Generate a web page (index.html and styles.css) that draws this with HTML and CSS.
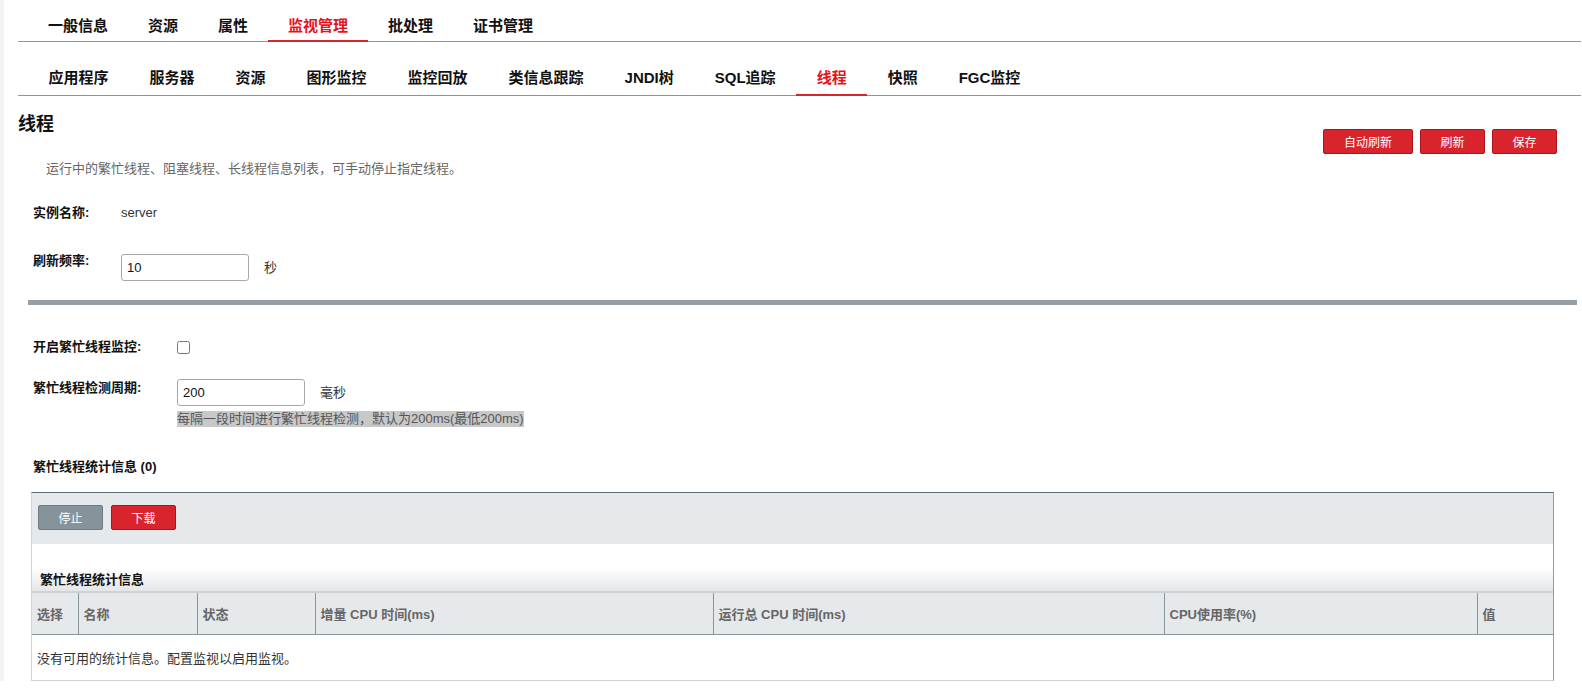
FILE: index.html
```html
<!DOCTYPE html>
<html lang="zh-CN">
<head>
    <meta charset="UTF-8">
    <meta name="viewport" content="width=device-width, initial-scale=1.0">
    <title>线程 - 监视管理</title>
    <link rel="stylesheet" href="styles.css">
</head>
<body>
<div class="page">
    <ul class="tabs main-tabs">
        <li>一般信息</li>
        <li>资源</li>
        <li>属性</li>
        <li class="active">监视管理</li>
        <li>批处理</li>
        <li>证书管理</li>
    </ul>
    <ul class="tabs sub-tabs">
        <li>应用程序</li>
        <li>服务器</li>
        <li>资源</li>
        <li>图形监控</li>
        <li>监控回放</li>
        <li>类信息跟踪</li>
        <li>JNDI树</li>
        <li>SQL追踪</li>
        <li class="active">线程</li>
        <li>快照</li>
        <li>FGC监控</li>
    </ul>

    <div class="header">
        <h1>线程</h1>
        <div class="actions">
            <button class="btn btn-red btn-wide">自动刷新</button>
            <button class="btn btn-red">刷新</button>
            <button class="btn btn-red">保存</button>
        </div>
    </div>
    <p class="desc">运行中的繁忙线程、阻塞线程、长线程信息列表，可手动停止指定线程。</p>

    <div class="form-row first">
        <label class="lbl">实例名称:</label>
        <span class="value">server</span>
    </div>
    <div class="form-row rate">
        <label class="lbl">刷新频率:</label>
        <input type="text" class="txt" value="10">
        <span class="unit">秒</span>
    </div>

    <div class="divider"></div>

    <div class="form-row busy-on">
        <label class="lbl wide">开启繁忙线程监控:</label>
        <input type="checkbox" class="chk">
    </div>
    <div class="form-row busy-period">
        <label class="lbl wide">繁忙线程检测周期:</label>
        <div class="field">
            <div class="field-line">
                <input type="text" class="txt" value="200">
                <span class="unit">毫秒</span>
            </div>
            <span class="hint">每隔一段时间进行繁忙线程检测，默认为200ms(最低200ms)</span>
        </div>
    </div>

    <h2 class="section-title">繁忙线程统计信息 (0)</h2>

    <div class="panel">
        <div class="toolbar">
            <button class="btn btn-gray">停止</button>
            <button class="btn btn-red">下载</button>
        </div>
        <div class="panel-title">繁忙线程统计信息</div>
        <table class="grid">
            <colgroup>
                <col style="width:46px">
                <col style="width:119px">
                <col style="width:118px">
                <col style="width:398px">
                <col style="width:451px">
                <col style="width:313px">
                <col>
            </colgroup>
            <thead>
                <tr>
                    <th>选择</th>
                    <th>名称</th>
                    <th>状态</th>
                    <th>增量 CPU 时间(ms)</th>
                    <th>运行总 CPU 时间(ms)</th>
                    <th>CPU使用率(%)</th>
                    <th>值</th>
                </tr>
            </thead>
            <tbody>
                <tr>
                    <td colspan="7" class="empty">没有可用的统计信息。配置监视以启用监视。</td>
                </tr>
            </tbody>
        </table>
    </div>
</div>
</body>
</html>
```

FILE: styles.css
```css
html, body {
    overflow: hidden;
}
body {
    margin: 0;
    background: white;
    border-left: 4px solid #f3f3f3;
    font-family: "Liberation Sans", "Noto Sans CJK SC", sans-serif;
    color: #222;
    font-size: 13px;
}
.tabs {
    list-style: none;
    margin: 0 1px 0 14px;
    padding: 0 0 0 10px;
    display: flex;
    border-bottom: 1px solid #8c969b;
}
.tabs li {
    padding: 0 20px;
    font-size: 15px;
    font-weight: bold;
    line-height: 20px;
    color: #111;
    border-bottom: 2px solid transparent;
    margin-bottom: -1px;
}
.tabs li.active {
    color: #e4141e;
    border-bottom-color: #d9232d;
}
.main-tabs li {
    padding-top: 16px;
    padding-bottom: 4px;
}
.sub-tabs li {
    padding: 26px 20.5px 6px;
}
.header {
    display: flex;
    justify-content: space-between;
    align-items: flex-start;
    padding-left: 14px;
    padding-right: 25px;
}
.header h1 {
    margin: 16px 0 0;
    font-size: 18px;
    line-height: 24px;
    color: #111;
}
.actions {
    margin-top: 33px;
    display: flex;
    gap: 7px;
}
.btn {
    font-family: inherit;
    font-size: 12px;
    color: white;
    height: 25px;
    width: 65px;
    border-radius: 2px;
    cursor: pointer;
    padding: 0;
}
.btn-wide {
    width: 90px;
}
.btn-red {
    background: #d9232d;
    border: 1px solid #a9161e;
}
.btn-gray {
    background: #86939b;
    border: 1px solid #6f7c84;
}
.desc {
    margin: 6px 0 0 42px;
    font-size: 13px;
    line-height: 18px;
    color: #666;
}
.form-row {
    display: flex;
    align-items: flex-start;
    padding-left: 29px;
}
.lbl {
    width: 88px;
    font-weight: bold;
    line-height: 18px;
    color: #111;
}
.lbl.wide {
    width: 144px;
}
.value {
    line-height: 18px;
    color: #333;
}
.form-row.first {
    margin-top: 26px;
}
.form-row.rate {
    margin-top: 30px;
}
.form-row.rate .txt {
    margin-top: 2px;
}
.form-row.rate .unit {
    margin-top: 2px;
}
.txt {
    width: 128px;
    height: 27px;
    box-sizing: border-box;
    border: 1px solid #a7a7a7;
    border-radius: 3px;
    padding: 0 5px;
    font-family: inherit;
    font-size: 13px;
    color: #111;
}
.unit {
    margin-left: 15px;
    line-height: 27px;
    color: #333;
}
.divider {
    margin: 19px 5px 0 24px;
    height: 5px;
    background: #959fa5;
}
.form-row.busy-on {
    margin-top: 33px;
}
.chk {
    margin: 3px 0 0;
    width: 13px;
    height: 13px;
}
.form-row.busy-period {
    margin-top: 23px;
}
.field-line {
    display: flex;
}
.hint {
    display: inline-block;
    margin-top: 5px;
    background: #c8c8c8;
    color: #555;
    font-size: 13px;
    line-height: 16px;
}
.section-title {
    margin: 31px 0 0 29px;
    font-size: 13px;
    line-height: 18px;
    color: #111;
}
.panel {
    margin: 16px 28px 0 27px;
    border: 1px solid #d2d2d2;
    border-top: 1px solid #5e6b72;
    border-right-color: #9a9a9a;
}
.toolbar {
    background: #e6e9ec;
    height: 51px;
    box-sizing: border-box;
    padding: 12px 0 0 6px;
    display: flex;
    gap: 8px;
}
.panel-title {
    margin-top: 24px;
    height: 23px;
    box-sizing: border-box;
    padding: 3px 0 0 8px;
    line-height: 18px;
    font-weight: bold;
    color: #111;
    background: linear-gradient(#ffffff, #e3e5e7);
}
.grid {
    width: 100%;
    border-collapse: collapse;
    table-layout: fixed;
}
.grid th {
    background: #e6e9ec;
    border-top: 2px solid #cfd2d5;
    border-bottom: 1px solid #88959b;
    border-left: 1px solid #88959b;
    height: 41px;
    padding: 0 5px;
    text-align: left;
    color: #666;
    font-size: 13px;
}
.grid th:first-child {
    border-left: none;
}
.grid td.empty {
    height: 45px;
    padding: 0 5px;
    color: #333;
}
```
